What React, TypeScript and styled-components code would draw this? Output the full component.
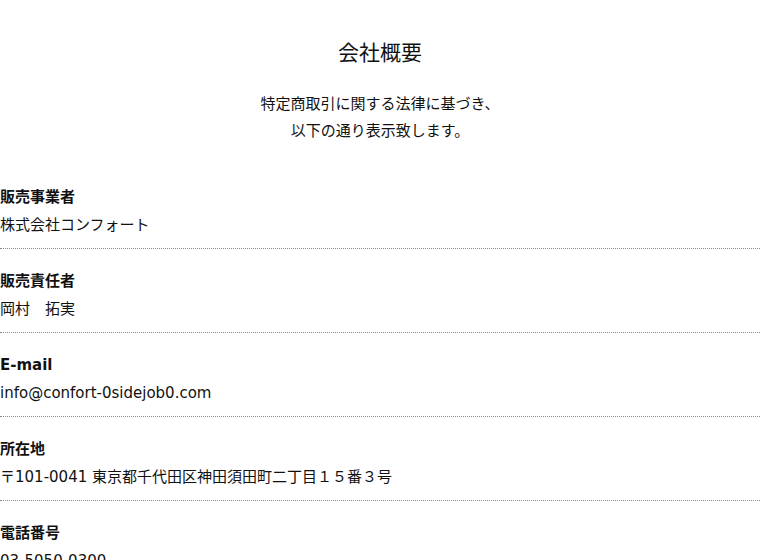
import React from 'react'
import styled, { createGlobalStyle } from 'styled-components'

const GlobalStyle = createGlobalStyle`
  html, body {
    margin: 0;
    padding: 0;
    background: #fff;
  }
  body {
    font-family: "DejaVu Sans", "Noto Sans CJK JP", sans-serif;
    color: #111;
  }
`

const Page = styled.main`
  width: 760px;
  padding-top: 35px;
`

const Title = styled.h1`
  margin: 0;
  font-family: "Noto Sans CJK JP", sans-serif;
  font-size: 21px;
  font-weight: 400;
  line-height: 32px;
  text-align: center;
`

const Lead = styled.p`
  margin: 24px 0 0;
  font-size: 15px;
  line-height: 27px;
  text-align: center;
`

const List = styled.dl`
  margin: 20px 0 0;
  padding: 0;
`

const Item = styled.div`
  padding: 18px 0 9px;
  border-bottom: 1px dotted #8a8a8a;
`

const Label = styled.dt`
  margin: 0;
  font-size: 15px;
  font-weight: 700;
  line-height: 28px;
`

const Value = styled.dd`
  margin: 0;
  font-size: 15px;
  line-height: 28px;
`

const rows = [
  { label: '販売事業者', value: '株式会社コンフォート' },
  { label: '販売責任者', value: '岡村　拓実' },
  { label: 'E-mail', value: 'info@confort-0sidejob0.com' },
  { label: '所在地', value: '〒101-0041 東京都千代田区神田須田町二丁目１５番３号' },
  { label: '電話番号', value: '03-5050-0300' },
]

export default function App() {
  return (
    <>
      <GlobalStyle />
      <Page>
        <Title>会社概要</Title>
        <Lead>
          特定商取引に関する法律に基づき、
          <br />
          以下の通り表示致します。
        </Lead>
        <List>
          {rows.map((r) => (
            <Item key={r.label}>
              <Label>{r.label}</Label>
              <Value>{r.value}</Value>
            </Item>
          ))}
        </List>
      </Page>
    </>
  )
}
